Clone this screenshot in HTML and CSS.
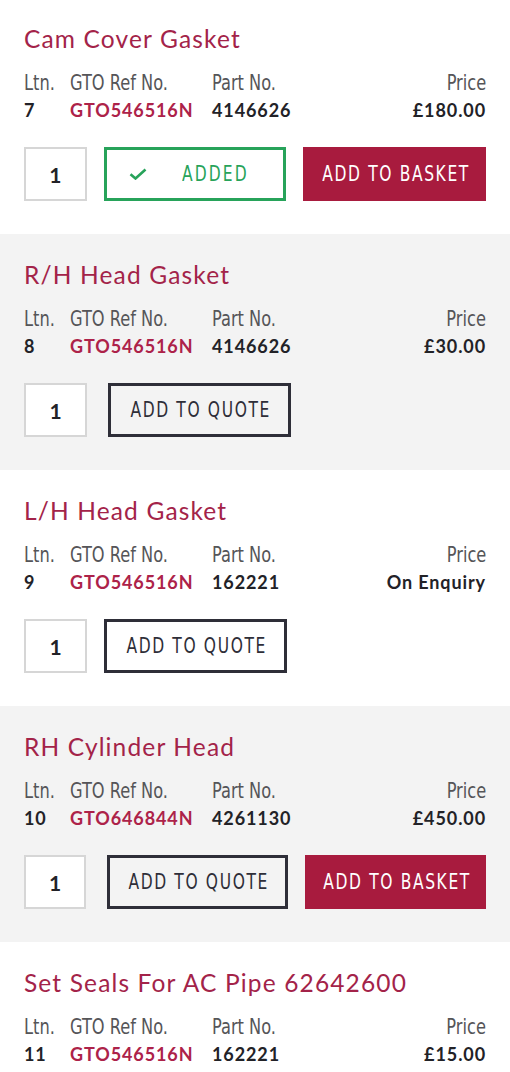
FILE: index.html
```html
<!DOCTYPE html>
<html>
<head>
<meta charset="utf-8">
<link rel="stylesheet" href="styles.css">
</head>
<body>
<div class="list">
  <section class="item item-first">
    <h2 class="title">Cam Cover Gasket</h2>
    <div class="specs">
      <span class="label">Ltn.</span><span class="label">GTO Ref No.</span><span class="label">Part No.</span><span class="label right">Price</span>
      <span class="val">7</span><span class="val ref">GTO546516N</span><span class="val">4146626</span><span class="val right">£180.00</span>
    </div>
    <div class="actions">
      <div class="qty">1</div>
      <button class="btn btn-added"><svg class="check" viewBox="0 0 18 12" width="18" height="12"><path d="M1.5 6.2 L6.5 10.5 L16.5 1.5" fill="none" stroke="#27a35a" stroke-width="2.6"/></svg><span class="btn-text">ADDED</span></button>
      <button class="btn btn-basket"><span class="btn-text">ADD TO BASKET</span></button>
    </div>
  </section>
  <section class="item alt">
    <h2 class="title">R/H Head Gasket</h2>
    <div class="specs">
      <span class="label">Ltn.</span><span class="label">GTO Ref No.</span><span class="label">Part No.</span><span class="label right">Price</span>
      <span class="val">8</span><span class="val ref">GTO546516N</span><span class="val">4146626</span><span class="val right">£30.00</span>
    </div>
    <div class="actions">
      <div class="qty">1</div>
      <button class="btn btn-quote shift"><span class="btn-text">ADD TO QUOTE</span></button>
    </div>
  </section>
  <section class="item">
    <h2 class="title">L/H Head Gasket</h2>
    <div class="specs">
      <span class="label">Ltn.</span><span class="label">GTO Ref No.</span><span class="label">Part No.</span><span class="label right">Price</span>
      <span class="val">9</span><span class="val ref">GTO546516N</span><span class="val">162221</span><span class="val right">On Enquiry</span>
    </div>
    <div class="actions">
      <div class="qty">1</div>
      <button class="btn btn-quote"><span class="btn-text">ADD TO QUOTE</span></button>
    </div>
  </section>
  <section class="item alt">
    <h2 class="title">RH Cylinder Head</h2>
    <div class="specs">
      <span class="label">Ltn.</span><span class="label">GTO Ref No.</span><span class="label">Part No.</span><span class="label right">Price</span>
      <span class="val">10</span><span class="val ref">GTO646844N</span><span class="val">4261130</span><span class="val right">£450.00</span>
    </div>
    <div class="actions">
      <div class="qty">1</div>
      <button class="btn btn-quote shift"><span class="btn-text">ADD TO QUOTE</span></button>
      <button class="btn btn-basket"><span class="btn-text">ADD TO BASKET</span></button>
    </div>
  </section>
  <section class="item item-last">
    <h2 class="title">Set Seals For AC Pipe 62642600</h2>
    <div class="specs">
      <span class="label">Ltn.</span><span class="label">GTO Ref No.</span><span class="label">Part No.</span><span class="label right">Price</span>
      <span class="val">11</span><span class="val ref">GTO546516N</span><span class="val">162221</span><span class="val right">£15.00</span>
    </div>
  </section>
</div>
</body>
</html>
```

FILE: styles.css
```css
* { box-sizing: border-box; }
html, body { margin: 0; padding: 0; background: #fff; }
body { width: 510px; height: 1072px; overflow: hidden; }
.list { display: flex; flex-direction: column; }
.item-first { margin-top: -2px; }
.item {
  height: 236px;
  flex: none;
  padding: 26px 24px 0 24px;
  background: #fff;
}
.item-last { height: 130px; }
.item.alt { background: #f3f3f3; }
.title {
  margin: 0;
  font-family: "Lato", "Noto Sans", sans-serif;
  font-weight: 400;
  font-size: 24.5px;
  line-height: 30px;
  color: #a32349;
  letter-spacing: 1.15px;
}
.specs {
  display: grid;
  grid-template-columns: 46px 142px 1fr auto;
  margin-top: 17px;
}
.label {
  font-family: "DejaVu Sans Condensed", "DejaVu Sans", sans-serif;
  font-stretch: condensed;
  font-size: 20.5px;
  line-height: 24px;
  color: #555558;
  white-space: nowrap;
  transform: scaleX(0.88);
  transform-origin: left center;
}
.label.right { transform-origin: right center; }
.val {
  font-family: "Lato", "Noto Sans", sans-serif;
  font-weight: 700;
  font-size: 18px;
  line-height: 30px;
  color: #222227;
  letter-spacing: 0.9px;
}
.val.ref { color: #ad2249; }
.right { text-align: right; }
.actions {
  display: flex;
  gap: 17px;
  margin-top: 22px;
}
.qty {
  width: 63px;
  height: 54px;
  border: 2px solid #d6d6d6;
  background: #fff;
  display: flex;
  align-items: center;
  justify-content: center;
  font-family: "Lato", "Noto Sans", sans-serif;
  font-weight: 700;
  font-size: 21px;
  color: #222227;
}
.btn {
  width: 183px;
  height: 54px;
  margin: 0;
  padding: 0;
  font-family: "DejaVu Sans Condensed", "DejaVu Sans", sans-serif;
  font-stretch: condensed;
  font-size: 21px;
  letter-spacing: 2px;
  display: flex;
  align-items: center;
  justify-content: center;
  cursor: pointer;
}
.btn-text {
  display: inline-block;
  white-space: nowrap;
  transform: scaleX(0.82);
  transform-origin: center center;
  margin-right: -2px;
}
.btn-basket {
  background: #a81b3e;
  border: 0;
  color: #fff;
}
.btn-quote {
  background: #fff;
  border: 3px solid #2e2e38;
  color: #2e2e38;
}
.alt .btn-quote { background: #f3f3f3; }
.shift { margin-left: 4px; }
.btn-added {
  background: #fff;
  border: 3px solid #27a35a;
  color: #27a35a;
  letter-spacing: 2.6px;
  justify-content: flex-start;
  padding-left: 22px;
  gap: 35px;
}
.btn-added .btn-text { transform-origin: left center; }
.check { display: block; }
```
